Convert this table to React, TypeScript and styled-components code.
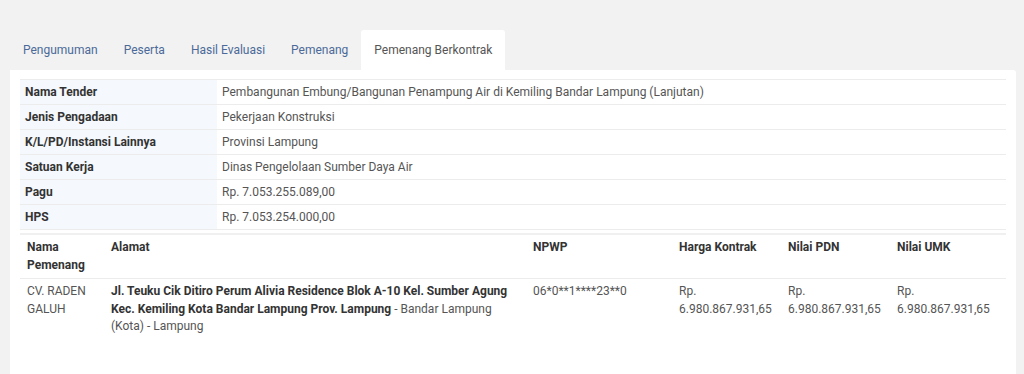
import React from 'react';
import styled, { createGlobalStyle } from 'styled-components';

const GlobalStyle = createGlobalStyle`
  html, body {
    margin: 0;
    padding: 0;
    background: #f2f2f2;
    font-family: Roboto, "Liberation Sans", Arial, sans-serif;
    font-size: 12px;
    color: #555;
  }
`;

const Page = styled.div`
  padding: 30px 8px 0 10px;
`;

const TabList = styled.ul`
  display: flex;
  list-style: none;
  margin: 0;
  padding: 0;
`;

const Tab = styled.li<{ $active?: boolean }>`
  height: 40px;
  display: flex;
  align-items: center;
  padding: 0 13px;
  color: ${(p) => (p.$active ? '#555' : '#4b6a99')};
  background: ${(p) => (p.$active ? '#fff' : 'transparent')};
  border-radius: 3px 3px 0 0;
`;

const Card = styled.div`
  background: #fff;
  padding: 9px 10px 40px 10px;
  border-radius: 0 3px 0 0;
`;

const InfoTable = styled.table`
  width: 100%;
  border-collapse: collapse;
  border-bottom: 1px solid #ececec;

  td {
    border-top: 1px solid #ececec;
    padding: 4px 5px;
    line-height: 16px;
    height: 16px;
  }
`;

const LabelCell = styled.td`
  width: 187px;
  background: #f5f8fc;
  font-weight: 700;
  color: #333;
`;

const ValueCell = styled.td`
  color: #555;
`;

const WinnerTable = styled.table`
  width: 100%;
  table-layout: fixed;
  margin-top: 3px;
  border-collapse: collapse;
  border-top: 2px solid #f0f0f0;

  td {
    text-align: left;
    vertical-align: top;
    padding: 4px 7px;
    line-height: 17.5px;
    color: #555;
  }
`;

const HeadCell = styled.th<{ $w?: number }>`
  width: ${(p) => (p.$w ? `${p.$w}px` : 'auto')};
  text-align: left;
  vertical-align: top;
  padding: 4px 7px;
  line-height: 17.5px;
  font-weight: 700;
  color: #333;
  border-bottom: 1px solid #ececec;
`;

const Strong = styled.b`
  color: #333;
`;

const tabs = ['Pengumuman', 'Peserta', 'Hasil Evaluasi', 'Pemenang', 'Pemenang Berkontrak'];

const info = [
  ['Nama Tender', 'Pembangunan Embung/Bangunan Penampung Air di Kemiling Bandar Lampung (Lanjutan)'],
  ['Jenis Pengadaan', 'Pekerjaan Konstruksi'],
  ['K/L/PD/Instansi Lainnya', 'Provinsi Lampung'],
  ['Satuan Kerja', 'Dinas Pengelolaan Sumber Daya Air'],
  ['Pagu', 'Rp. 7.053.255.089,00'],
  ['HPS', 'Rp. 7.053.254.000,00'],
];

// content widths; each cell adds 14px of padding
const columns: [string, number | undefined][] = [
  ['Nama Pemenang', 70],
  ['Alamat', 408],
  ['NPWP', 132],
  ['Harga Kontrak', 95],
  ['Nilai PDN', 95],
  ['Nilai UMK', undefined],
];

export default function App() {
  const harga = 'Rp. 6.980.867.931,65';
  return (
    <Page>
      <GlobalStyle />
      <TabList>
        {tabs.map((t, i) => (
          <Tab key={t} $active={i === tabs.length - 1}>{t}</Tab>
        ))}
      </TabList>
      <Card>
        <InfoTable>
          <tbody>
            {info.map(([label, value]) => (
              <tr key={label}>
                <LabelCell>{label}</LabelCell>
                <ValueCell>{value}</ValueCell>
              </tr>
            ))}
          </tbody>
        </InfoTable>
        <WinnerTable>
          <thead>
            <tr>
              {columns.map(([name, w]) => (
                <HeadCell key={name} $w={w}>{name}</HeadCell>
              ))}
            </tr>
          </thead>
          <tbody>
            <tr>
              <td>CV. RADEN GALUH</td>
              <td>
                <Strong>Jl. Teuku Cik Ditiro Perum Alivia Residence Blok A-10 Kel. Sumber Agung Kec. Kemiling Kota Bandar Lampung Prov. Lampung</Strong> - Bandar Lampung (Kota) - Lampung
              </td>
              <td>06*0**1****23**0</td>
              <td>{harga}</td>
              <td>{harga}</td>
              <td>{harga}</td>
            </tr>
          </tbody>
        </WinnerTable>
      </Card>
    </Page>
  );
}
